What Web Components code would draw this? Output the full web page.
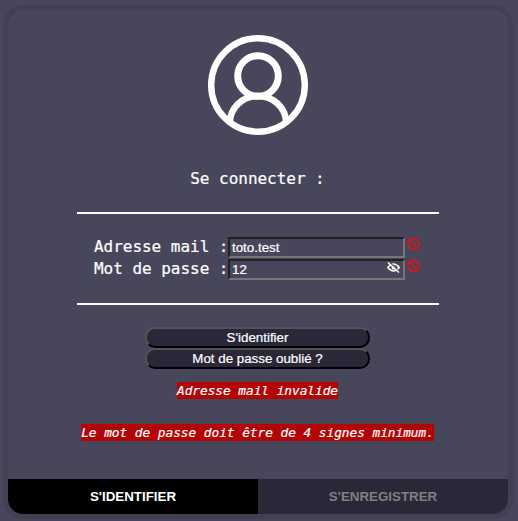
<!DOCTYPE html>
<html lang="fr">
<head>
<meta charset="utf-8">
<title>Se connecter</title>
<style>
html,body{margin:0;height:100%;overflow:hidden;background:#48465b}
body{font:16px/22px "DejaVu Sans Mono",monospace;color:#fff;-webkit-text-stroke:.2px}
</style>
</head>
<body>
<login-card></login-card>
<script>
function define(name, html) {
  customElements.define(name, class extends HTMLElement {
    constructor() {
      super();
      this.attachShadow({mode: "open"}).innerHTML = html;
    }
  });
}

define("user-avatar", `<style>:host{display:block;width:100px;height:100px}svg{display:block}</style>
<svg width="100" height="100" viewBox="0 0 100 100" fill="none" stroke="#fff">
<circle cx="50" cy="50" r="46.8" stroke-width="6.4"/>
<circle cx="50" cy="41" r="20.3" stroke-width="7"/>
<path d="M21.8 88A28.2 27 0 0 1 78.2 88" stroke-width="6.6"/></svg>`);

define("field-row", `<style>
:host{display:flex;height:22px;white-space:pre}
label{width:134px;letter-spacing:-.03px;line-height:20px}
.box{box-sizing:border-box;width:177px;height:21px;border:2px solid;border-color:#212121 #767676 #767676 #212121;display:flex;align-items:center;justify-content:space-between;padding:0 2px;font:13.333px/17px "Liberation Sans",Arial,sans-serif}
.ban{margin:0 0 0 2px;flex:none}
</style><label><slot name="label"></slot></label><div class="box"><slot></slot><slot name="icon"></slot></div>
<svg class="ban" width="13" height="14" viewBox="0 0 13 14" fill="none" stroke="#f50d10" stroke-width="1.5"><circle cx="6.4" cy="6.8" r="5.6"/><path d="M2.5 2.9l7.8 7.8"/></svg>`);

define("hidden-eye", `<style>:host{display:block;width:13px;height:11px;margin:-4px 1px 0 0;white-space:normal}svg{display:block}</style>
<svg width="13" height="11" viewBox="0 0 13 11" fill="none" stroke="#fff"><path d="M.8 5.5Q6.5-1.4 12.2 5.5 6.5 12.4.8 5.5Z" stroke-width="1.6"/><circle cx="6.5" cy="5.5" r="1.9" fill="#fff" stroke="none"/><path d="M2.3.1l10.2 9.7" stroke="#48465b" stroke-width="1.2"/><path d="M1 .5l11 10" stroke-width="1.4"/></svg>`);

define("pill-button", `<style>
:host{display:block}
button{display:block;box-sizing:border-box;width:225px;height:21px;margin:0;padding:0;border:2px outset #000;border-radius:10px;background:#292738;color:#fff;font:13.333px/16px "Liberation Sans",Arial,sans-serif;-webkit-text-stroke:.2px}
</style><button><slot></slot></button>`);

define("error-note", `<style>:host{display:block;height:17px;background:#b30505;font-size:12.8px;line-height:17px;font-style:italic;white-space:pre;letter-spacing:-.036px}</style><slot></slot>`);

define("tab-item", `<style>
:host{flex:1;background:#292738;color:#808080;text-align:center;font:bold 13.333px/35px "Liberation Sans",Arial,sans-serif;-webkit-text-stroke:0}
:host([active]){background:#000;color:#fff}
</style><slot></slot>`);

define("login-card", `<style>
:host{display:flex;flex-direction:column;align-items:center;box-sizing:border-box;width:500px;height:504px;margin:10px 0 0 8px;border-radius:15px;box-shadow:0 0 0 5px #424053;background:#48465b;overflow:hidden}
user-avatar{margin-top:25px}
h1{margin:33px 1px 0 0;font:inherit;height:22px;letter-spacing:-.03px}
.fields{box-sizing:border-box;width:362px;height:93px;margin-top:22px;padding:23px 0 0 17px;border:solid #fff;border-width:2px 0}
.buttons{margin:22px 1px 0 0}
error-note{margin-right:1px}
error-note.first{margin-top:13px}
error-note.second{margin-top:25px}
nav{display:flex;width:100%;height:35px;margin-top:auto}
</style>
<user-avatar></user-avatar>
<h1>Se connecter :</h1>
<div class="fields">
<field-row><span slot="label">Adresse mail :</span><span>toto.test</span></field-row>
<field-row><span slot="label">Mot de passe :</span><span>12</span><hidden-eye slot="icon"></hidden-eye></field-row>
</div>
<div class="buttons"><pill-button>S'identifier</pill-button><pill-button>Mot de passe oublié ?</pill-button></div>
<error-note class="first">Adresse mail invalide</error-note>
<error-note class="second">Le mot de passe doit être de 4 signes minimum.</error-note>
<nav><tab-item active>S'IDENTIFIER</tab-item><tab-item>S'ENREGISTRER</tab-item></nav>`);
</script>
</body>
</html>
